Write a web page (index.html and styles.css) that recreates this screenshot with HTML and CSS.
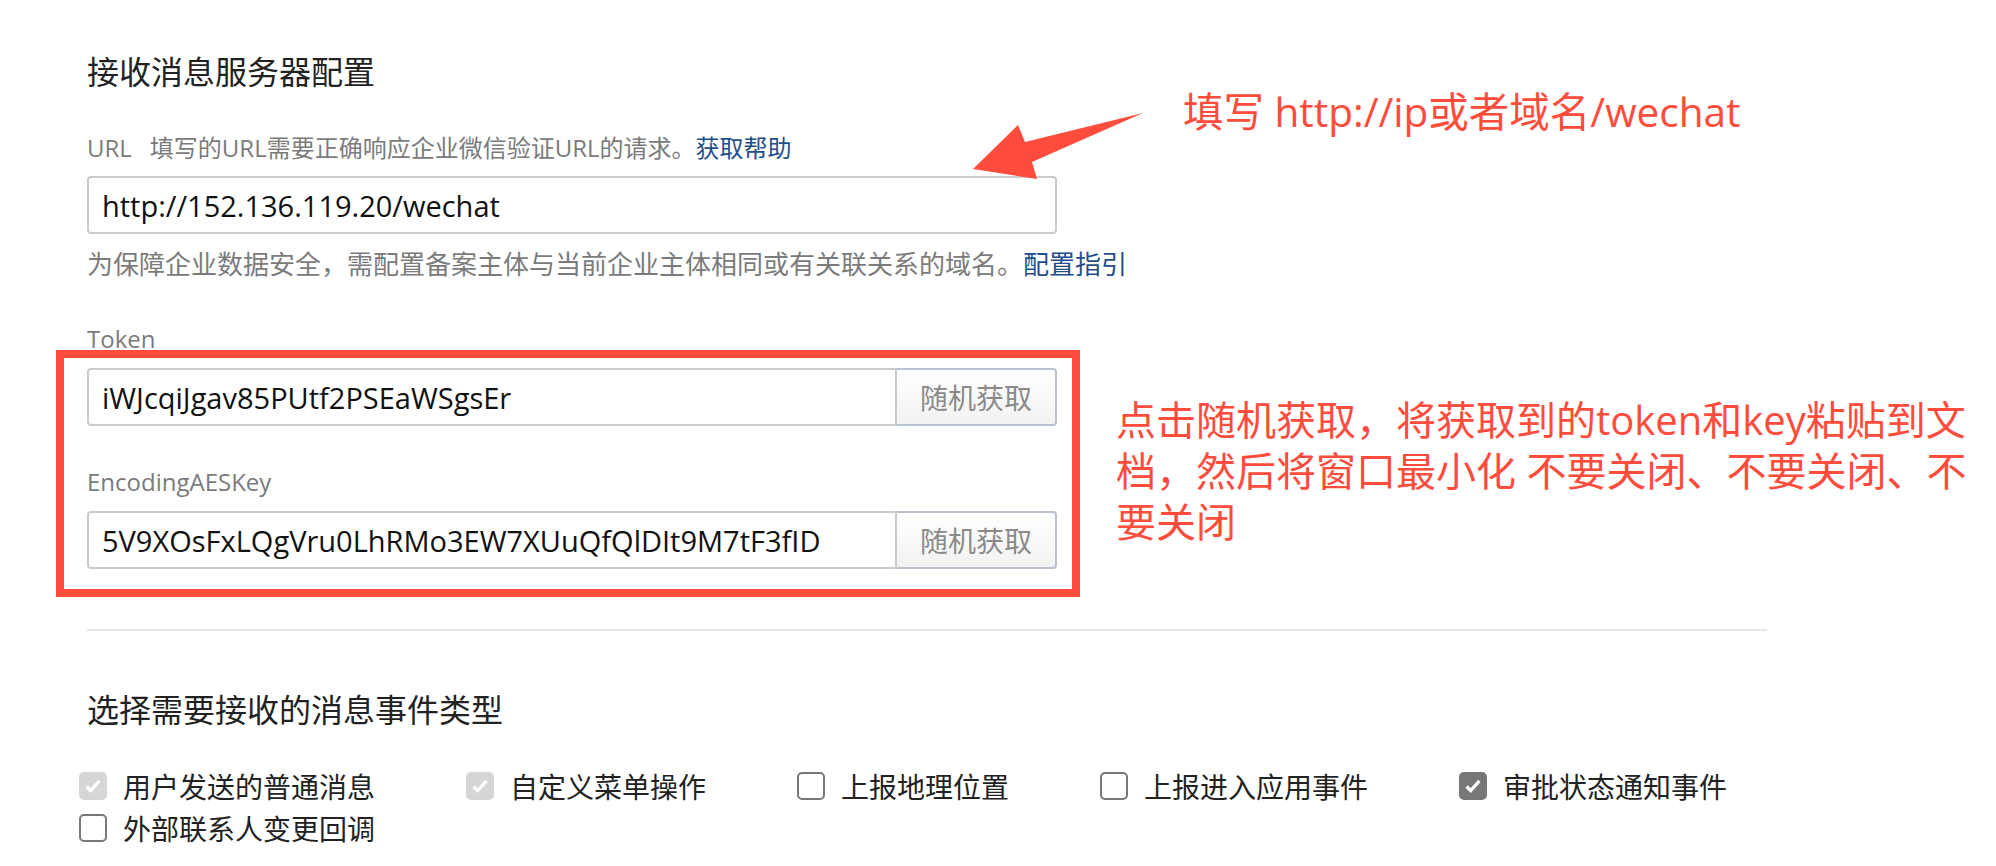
FILE: index.html
```html
<!DOCTYPE html>
<html lang="zh-CN">
<head>
  <meta charset="UTF-8" />
  <title>接收消息服务器配置</title>
  <link rel="stylesheet" href="styles.css">
</head>
<body>

<div class="page">
  <h2 class="sec-title">接收消息服务器配置</h2>

  <div class="tip"><span class="tag">URL</span>填写的URL需要正确响应企业微信验证URL的请求。<a class="link" href="#">获取帮助</a></div>
  <input class="text-input" type="text" value="http://152.136.119.20/wechat" />
  <div class="hint">为保障企业数据安全，需配置备案主体与当前企业主体相同或有关联关系的域名。<a class="link" href="#">配置指引</a></div>

  <div class="label first">Token</div>
  <div class="input-group">
    <input type="text" value="iWJcqiJgav85PUtf2PSEaWSgsEr" />
    <button type="button">随机获取</button>
  </div>

  <div class="label second">EncodingAESKey</div>
  <div class="input-group">
    <input type="text" value="5V9XOsFxLQgVru0LhRMo3EW7XUuQfQlDIt9M7tF3fID" />
    <button type="button">随机获取</button>
  </div>

  <div class="divider"></div>

  <h2 class="sec-title events-title">选择需要接收的消息事件类型</h2>
  <ul class="events">
    <li class="event"><span class="cb locked"><svg viewBox="0 0 24 24"><path d="M5 12.5l4.5 4.5L19 6.5"/></svg></span>用户发送的普通消息</li>
    <li class="event"><span class="cb locked"><svg viewBox="0 0 24 24"><path d="M5 12.5l4.5 4.5L19 6.5"/></svg></span>自定义菜单操作</li>
    <li class="event"><span class="cb"></span>上报地理位置</li>
    <li class="event"><span class="cb"></span>上报进入应用事件</li>
    <li class="event"><span class="cb on"><svg viewBox="0 0 24 24"><path d="M5 12.5l4.5 4.5L19 6.5"/></svg></span>审批状态通知事件</li>
    <li class="event"><span class="cb"></span>外部联系人变更回调</li>
  </ul>
</div>

<!-- annotations drawn over the page -->
<svg class="arrow" width="180" height="75" viewBox="0 0 180 75">
  <polygon points="173,3 55,32 48,15 3,59 67,69 62,52" />
</svg>
<div class="note">填写 http://ip或者域名/wechat</div>
<div class="mark-box"></div>
<div class="note-block">点击随机获取，将获取到的token和key粘贴到文<br>档，然后将窗口最小化 不要关闭、不要关闭、不<br>要关闭</div>

</body>
</html>
```

FILE: styles.css
```css
:root {
  --red: #ff4c3c;
  --muted: #7b7b7b;
  --link: #1f4e8c;
  --line: #cbcbcb;
  --text: #222;
}

* {
  box-sizing: border-box;
  margin: 0;
  padding: 0;
}

body {
  font-family: "Open Sans", "Noto Sans CJK SC", sans-serif;
  color: var(--text);
  background: #fff;
  width: 1996px;
  height: 866px;
  overflow: hidden;
  position: relative;
}

.page {
  padding: 50px 0 0 87px;
  width: 1767px;
}

.sec-title {
  font-size: 32px;
  font-weight: 400;
  line-height: 44px;
  color: var(--text);
}

.tip {
  margin-top: 39px;
  font-size: 24px;
  line-height: 30px;
  color: var(--muted);
}

.tip .tag {
  margin-right: 18px;
}

.link {
  color: var(--link);
  text-decoration: none;
}

.text-input,
.input-group input {
  font-family: "Open Sans", "Noto Sans CJK SC", sans-serif;
  font-size: 29px;
  color: #111;
  padding: 0 13px;
  border: 2px solid var(--line);
  background: #fff;
  outline: none;
}

.text-input {
  display: block;
  margin-top: 13px;
  width: 970px;
  height: 58px;
  border-radius: 4px;
}

.hint {
  margin-top: 13px;
  font-size: 26px;
  line-height: 34px;
  color: var(--muted);
}

.label {
  font-size: 24px;
  line-height: 32px;
  color: var(--muted);
}

.label.first {
  margin-top: 42px;
}

.label.second {
  margin-top: 40px;
}

.input-group {
  display: flex;
  margin-top: 13px;
  width: 970px;
  height: 58px;
}

.input-group input {
  flex: 1;
  min-width: 0;
  border-right: none;
  border-radius: 4px 0 0 4px;
}

.input-group button {
  width: 162px;
  border: 2px solid #b9c2cd;
  border-left-color: var(--line);
  border-radius: 0 4px 4px 0;
  background: linear-gradient(#ffffff, #f2f2f2);
  color: #8a8a8a;
  font-family: "Noto Sans CJK SC", sans-serif;
  font-size: 28px;
}

.divider {
  margin-top: 60px;
  width: 1680px;
  height: 2px;
  background: #e6e6ea;
}

.events-title {
  margin-top: 57px;
}

.events {
  list-style: none;
  display: flex;
  flex-wrap: wrap;
  column-gap: 91px;
  margin: 33px 0 0 -8px;
  width: 1688px;
}

.event {
  display: flex;
  align-items: center;
  gap: 16px;
  height: 42px;
  font-size: 28px;
  color: var(--text);
}

.cb {
  width: 28px;
  height: 28px;
  border: 2px solid #777;
  border-radius: 5px;
  background: #fff;
  display: flex;
  align-items: center;
  justify-content: center;
}

.cb svg {
  width: 22px;
  height: 22px;
  fill: none;
  stroke: #fff;
  stroke-width: 3.6;
}

.cb.on {
  background: #777;
  border-color: #777;
}

.cb.locked {
  background: #d6d6d6;
  border-color: #d6d6d6;
}

/* annotations */
.arrow {
  position: absolute;
  left: 970px;
  top: 110px;
}

.arrow polygon {
  fill: var(--red);
}

.note {
  position: absolute;
  left: 1183px;
  top: 87px;
  font-size: 40.5px;
  line-height: 50px;
  color: var(--red);
  white-space: nowrap;
}

.mark-box {
  position: absolute;
  left: 56px;
  top: 350px;
  width: 1024px;
  height: 247px;
  border: 8px solid var(--red);
}

.note-block {
  position: absolute;
  left: 1116px;
  top: 394px;
  font-size: 40px;
  line-height: 51px;
  color: var(--red);
  white-space: nowrap;
}
```
